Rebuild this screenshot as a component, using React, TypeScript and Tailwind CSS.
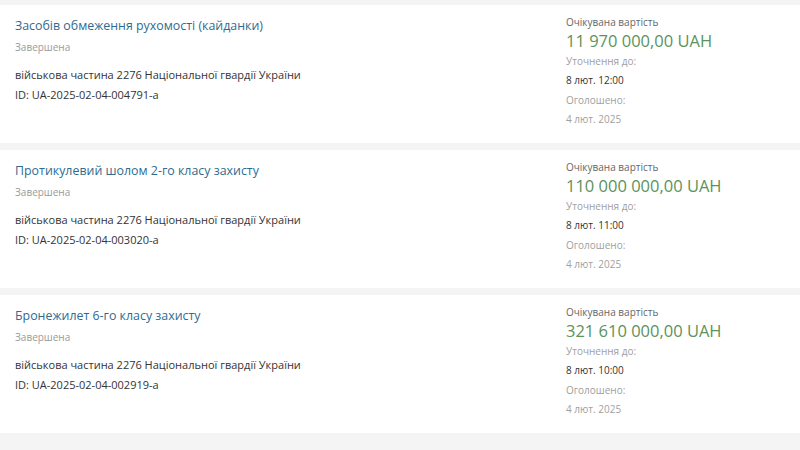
import React from 'react';

interface Tender {
  title: string;
  id: string;
  price: string;
  until: string;
}

const tenders: Tender[] = [
  {
    title: 'Засобів обмеження рухомості (кайданки)',
    id: 'UA-2025-02-04-004791-a',
    price: '11 970 000,00 UAH',
    until: '8 лют. 12:00',
  },
  {
    title: 'Протикулевий шолом 2-го класу захисту',
    id: 'UA-2025-02-04-003020-a',
    price: '110 000 000,00 UAH',
    until: '8 лют. 11:00',
  },
  {
    title: 'Бронежилет 6-го класу захисту',
    id: 'UA-2025-02-04-002919-a',
    price: '321 610 000,00 UAH',
    until: '8 лют. 10:00',
  },
];

const TenderCard: React.FC<{ t: Tender }> = ({ t }) => (
  <div className="flex h-[138px] bg-white">
    {/* Left: title, status, buyer */}
    <div className="flex-1 pl-[15px] pt-[11px]">
      <a className="block text-[12.4px] leading-[20px] text-[#2f6b90]">{t.title}</a>
      <div className="mt-[3px] text-[10px] leading-[16px] text-[#9a9a9a]">Завершена</div>
      <div className="mt-[10px] text-[11px] leading-[20px] text-[#333333]">
        військова частина 2276 Національної гвардії України
      </div>
      <div className="text-[11px] leading-[20px] text-[#333333]">ID: {t.id}</div>
    </div>

    {/* Right: price and dates */}
    <div className="w-[234px] pt-[9px]">
      <div className="text-[10px] leading-[16px] text-[#666666]">Очікувана вартість</div>
      <div className="text-[16.5px] leading-[22px] text-[#5c925c]">{t.price}</div>
      <div className="text-[10px] leading-[19.3px] text-[#a0a0a0]">Уточнення до:</div>
      <div className="text-[10px] leading-[19.3px] text-[#333333]">{t.until}</div>
      <div className="text-[10px] leading-[19.3px] text-[#a0a0a0]">Оголошено:</div>
      <div className="text-[10px] leading-[19.3px] text-[#a0a0a0]">4 лют. 2025</div>
    </div>
  </div>
);

export default function App() {
  return (
    <div
      className="h-[450px] w-[800px] overflow-hidden bg-[#f4f4f4] pt-[5px]"
      style={{ fontFamily: '"Open Sans", "Noto Sans", sans-serif' }}
    >
      <div className="flex flex-col gap-[7px]">
        {tenders.map((t) => (
          <TenderCard key={t.id} t={t} />
        ))}
      </div>
    </div>
  );
}
